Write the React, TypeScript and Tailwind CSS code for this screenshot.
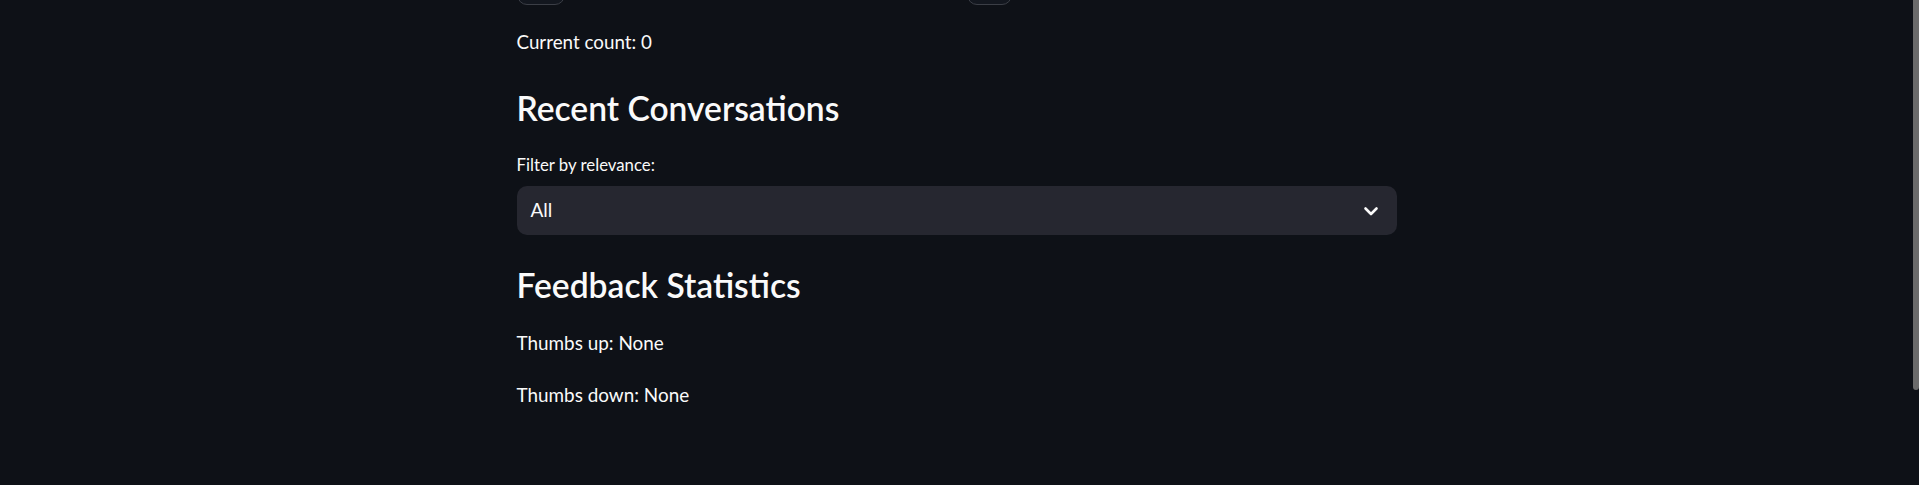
export default function App() {
  return (
    <div className="flex h-[485px] w-full overflow-hidden bg-[#0e1117] text-[#fafafa]" style={{ fontFamily: 'Lato, "Noto Sans", sans-serif' }}>
      {/* Main column */}
      <main className="flex-1">
        <div className="mx-auto w-[880px]">
          {/* Counter buttons, scrolled mostly out of view */}
          <div className="-mt-[43px] grid grid-cols-2 gap-[20px]">
            <div>
              <button aria-label="increment" className="block h-[48px] w-[48px] rounded-[10px] border border-[#3b3e46] bg-[#13171f]" />
            </div>
            <div>
              <button aria-label="decrement" className="block h-[48px] w-[45px] rounded-[10px] border border-[#3b3e46] bg-[#13171f]" />
            </div>
          </div>

          <p className="mt-[21px] text-[18.8px] leading-[32px]">Current count: 0</p>

          <h2 className="mt-[29px] text-[33.6px] font-semibold leading-[42px]">Recent Conversations</h2>

          {/* Relevance filter */}
          <label className="mt-[22px] block text-[16.8px] leading-[28px]">Filter by relevance:</label>
          <div className="mt-[7px] flex h-[49px] items-center justify-between rounded-[10px] bg-[#262730] pl-[14px] pr-[14px]">
            <span className="text-[19px]">All</span>
            <svg width="24" height="24" viewBox="0 0 24 24" fill="none" stroke="#fafafa" strokeWidth="2.6" strokeLinecap="round" strokeLinejoin="round">
              <polyline points="6.5 9.5 12 15 17.5 9.5" />
            </svg>
          </div>

          <h2 className="mt-[29px] text-[33.6px] font-semibold leading-[42px]">Feedback Statistics</h2>

          <p className="mt-[21px] text-[18.9px] leading-[32px]">Thumbs up: None</p>
          <p className="mt-[20px] text-[18.9px] leading-[32px]">Thumbs down: None</p>
        </div>
      </main>

      {/* Scrollbar */}
      <div className="w-[6px]">
        <div className="h-[390px] rounded-b-[3px] bg-[#6b6b6b]" />
      </div>
    </div>
  );
}
